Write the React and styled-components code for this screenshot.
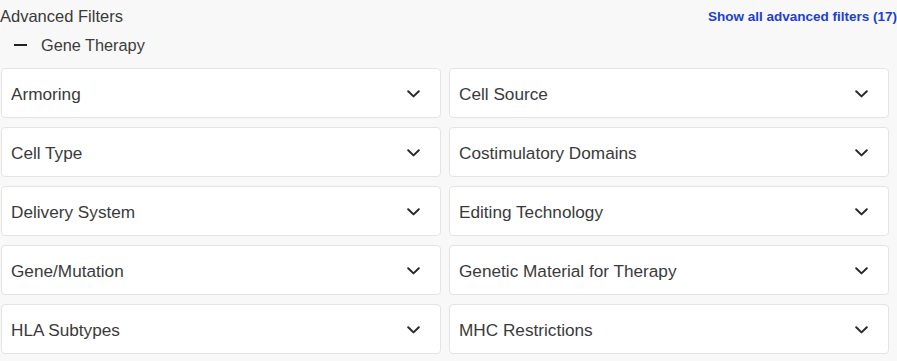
import React from "react";
import styled, { createGlobalStyle } from "styled-components";

const Global = createGlobalStyle`
  html, body { margin: 0; padding: 0; background: #f8f8f8; }
  body { font-family: "Liberation Sans", Arial, sans-serif; color: #333; }
`;

const Page = styled.div`
  width: 897px;
  height: 361px;
  box-sizing: border-box;
  padding: 0 0 0 1px;
  background: #f8f8f8;
  overflow: hidden;
`;

const Header = styled.div`
  display: flex;
  justify-content: space-between;
  align-items: flex-start;
  height: 32px;
`;

const Title = styled.div`
  font-size: 16.5px;
  color: #3a3a3a;
  padding-top: 7px;
  margin-left: -1px;
`;

const ShowAll = styled.a`
  font-size: 13.5px;
  font-weight: 700;
  color: #1b3fd0;
  text-decoration: none;
  padding-top: 9px;
  cursor: pointer;
`;

const Group = styled.div`
  display: flex;
  align-items: center;
  gap: 14px;
  padding-left: 13px;
  height: 26px;
  font-size: 16.3px;
  color: #3c3c3c;
`;

const Dash = styled.span`
  display: inline-block;
  width: 13px;
  height: 2px;
  background: #222;
`;

const Grid = styled.div`
  display: grid;
  grid-template-columns: 440px 440px;
  column-gap: 8px;
  row-gap: 9px;
  margin-top: 10px;
`;

const Select = styled.div`
  box-sizing: border-box;
  height: 50px;
  background: #fff;
  border: 1px solid #e4e4e4;
  border-radius: 4px;
  display: flex;
  align-items: center;
  justify-content: space-between;
  padding: 2px 20px 0 9px;
  font-size: 17.2px;
  color: #3a3a3a;
`;

const Chevron = () => (
  <svg width="13" height="8" viewBox="0 0 13 8" fill="none">
    <path d="M1.2 1.2 L6.5 6.4 L11.8 1.2" stroke="#2a2a2a" strokeWidth="2" strokeLinecap="round" strokeLinejoin="round" />
  </svg>
);

const filters = [
  "Armoring", "Cell Source",
  "Cell Type", "Costimulatory Domains",
  "Delivery System", "Editing Technology",
  "Gene/Mutation", "Genetic Material for Therapy",
  "HLA Subtypes", "MHC Restrictions",
];

export default function App() {
  return (
    <Page>
      <Global />
      <Header>
        <Title>Advanced Filters</Title>
        <ShowAll>Show all advanced filters (17)</ShowAll>
      </Header>
      <Group>
        <Dash />
        <span>Gene Therapy</span>
      </Group>
      <Grid>
        {filters.map((f) => (
          <Select key={f}>
            <span>{f}</span>
            <Chevron />
          </Select>
        ))}
      </Grid>
    </Page>
  );
}
